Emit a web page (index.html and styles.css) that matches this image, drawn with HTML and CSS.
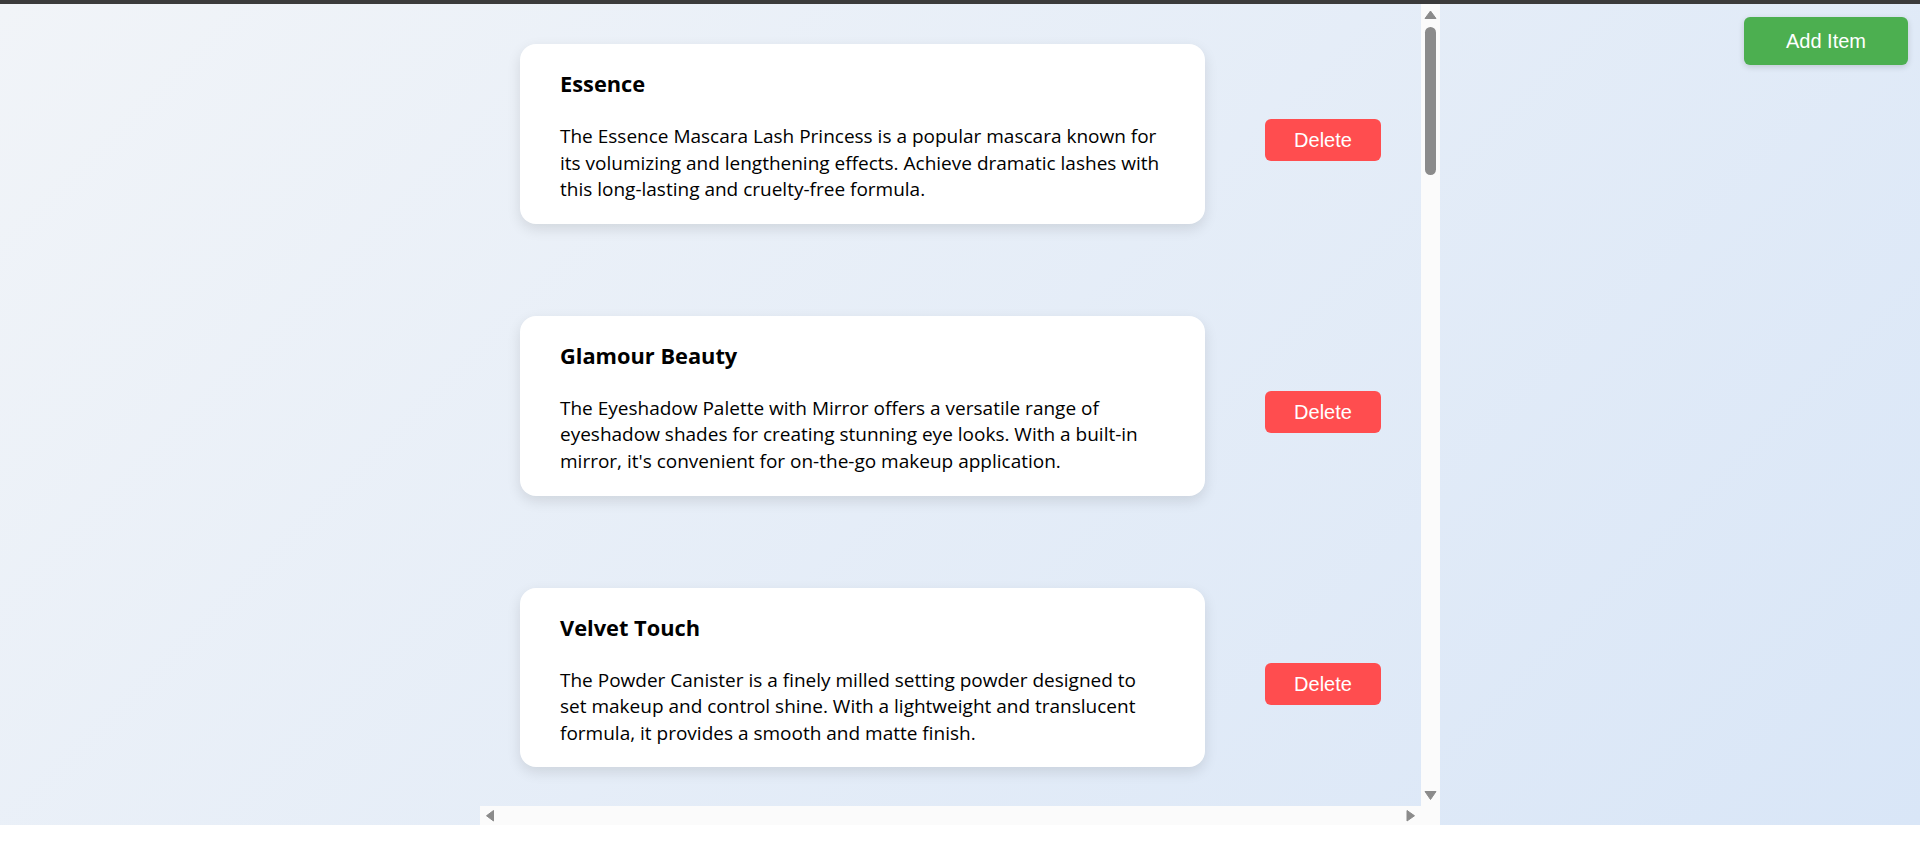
FILE: index.html
```html
<!DOCTYPE html>
<html lang="en">
<head>
<meta charset="utf-8">
<title>Products</title>
<link rel="stylesheet" href="styles.css">
</head>
<body>
<div class="topbar"></div>
<main class="app">
  <button class="add-btn">Add Item</button>
  <div class="scroller">
    <div class="viewport">
      <div class="list">
        <div class="row">
          <div class="card">
            <h3>Essence</h3>
            <p>The Essence Mascara Lash Princess is a popular mascara known for its volumizing and lengthening effects. Achieve dramatic lashes with this long-lasting and cruelty-free formula.</p>
          </div>
          <button class="del-btn">Delete</button>
        </div>
        <div class="row">
          <div class="card">
            <h3>Glamour Beauty</h3>
            <p>The Eyeshadow Palette with Mirror offers a versatile range of eyeshadow shades for creating stunning eye looks. With a built-in mirror, it's convenient for on-the-go makeup application.</p>
          </div>
          <button class="del-btn">Delete</button>
        </div>
        <div class="row">
          <div class="card">
            <h3>Velvet Touch</h3>
            <p>The Powder Canister is a finely milled setting powder designed to set makeup and control shine. With a lightweight and translucent formula, it provides a smooth and matte finish.</p>
          </div>
          <button class="del-btn">Delete</button>
        </div>
      </div>
    </div>
    <div class="vbar">
      <div class="sb-btn">
        <svg width="19" height="19" viewBox="0 0 19 19"><path d="M4 14.5 L9.5 7 L15 14.5 Z" fill="#8b8b8b" stroke="#8b8b8b" stroke-width="1" stroke-linejoin="round"/></svg>
      </div>
      <div class="vtrack">
        <div class="vthumb"></div>
      </div>
      <div class="sb-btn">
        <svg width="19" height="19" viewBox="0 0 19 19"><path d="M4 4.5 L15 4.5 L9.5 12.5 Z" fill="#8b8b8b" stroke="#8b8b8b" stroke-width="1" stroke-linejoin="round"/></svg>
      </div>
    </div>
    <div class="hbar">
      <div class="sb-btn">
        <svg width="19" height="19" viewBox="0 0 19 19"><path d="M13.5 4.5 L13.5 15 L6.5 9.75 Z" fill="#8b8b8b" stroke="#8b8b8b" stroke-width="1" stroke-linejoin="round"/></svg>
      </div>
      <div class="sb-btn">
        <svg width="19" height="19" viewBox="0 0 19 19"><path d="M5 4.5 L12.5 9.75 L5 15 Z" fill="#8b8b8b" stroke="#8b8b8b" stroke-width="1" stroke-linejoin="round"/></svg>
      </div>
    </div>
    <div class="corner"></div>
  </div>
</main>
</body>
</html>
```

FILE: styles.css
```css
html, body {
  margin: 0;
  padding: 0;
  background: #ffffff;
}

body {
  font-family: "Open Sans", "Noto Sans", sans-serif;
  color: #000;
}

.topbar {
  height: 4px;
  background: #3b3b3b;
}

.app {
  position: relative;
  height: 821px;
  background: linear-gradient(135deg, #f1f4f8 0%, #d9e6f7 100%);
}

.add-btn {
  position: absolute;
  top: 13px;
  right: 12px;
  width: 164px;
  height: 48px;
  border: none;
  border-radius: 6px;
  background: #4caf50;
  color: #fff;
  font-family: "Liberation Sans", Arial, sans-serif;
  font-size: 20px;
  line-height: 24px;
  padding: 0;
  box-shadow: 0 2px 6px rgba(0, 0, 0, 0.15);
  cursor: pointer;
}

.scroller {
  width: 960px;
  height: 821px;
  margin: 0 auto;
  display: grid;
  grid-template-columns: 941px 19px;
  grid-template-rows: 802px 19px;
}

.viewport {
  overflow: hidden;
}

.list {
  padding-top: 40px;
}

.vbar {
  display: flex;
  flex-direction: column;
  background: #fbfbfb;
}

.hbar {
  display: flex;
  justify-content: space-between;
  background: #fbfbfb;
}

.corner {
  background: #fbfbfb;
}

.sb-btn {
  width: 19px;
  height: 19px;
  flex: none;
}

.sb-btn svg {
  display: block;
}

.vtrack {
  flex: 1;
  padding: 4px 4px 0;
}

.vthumb {
  height: 148px;
  border-radius: 6px;
  background: #8b8b8b;
}

.row {
  display: flex;
  justify-content: space-between;
  align-items: center;
  padding: 0 40px;
  margin-bottom: 79px;
}

.card {
  width: 685px;
  box-sizing: border-box;
  padding: 24px 44px 21px 40px;
  margin-bottom: 13px;
  background: #ffffff;
  border-radius: 16px;
  box-shadow: 0 5px 14px rgba(0, 0, 0, 0.11);
}

.card h3 {
  margin: 0 0 24px;
  font-size: 21.8px;
  line-height: 31px;
  font-weight: 700;
}

.card p {
  margin: 0;
  font-size: 19px;
  line-height: 26.6px;
}

.del-btn {
  width: 116px;
  height: 42px;
  padding: 0;
  border: none;
  border-radius: 6px;
  background: #ff4d4f;
  color: #fff;
  font-family: "Liberation Sans", Arial, sans-serif;
  font-size: 20px;
  line-height: 24px;
  cursor: pointer;
}
```
